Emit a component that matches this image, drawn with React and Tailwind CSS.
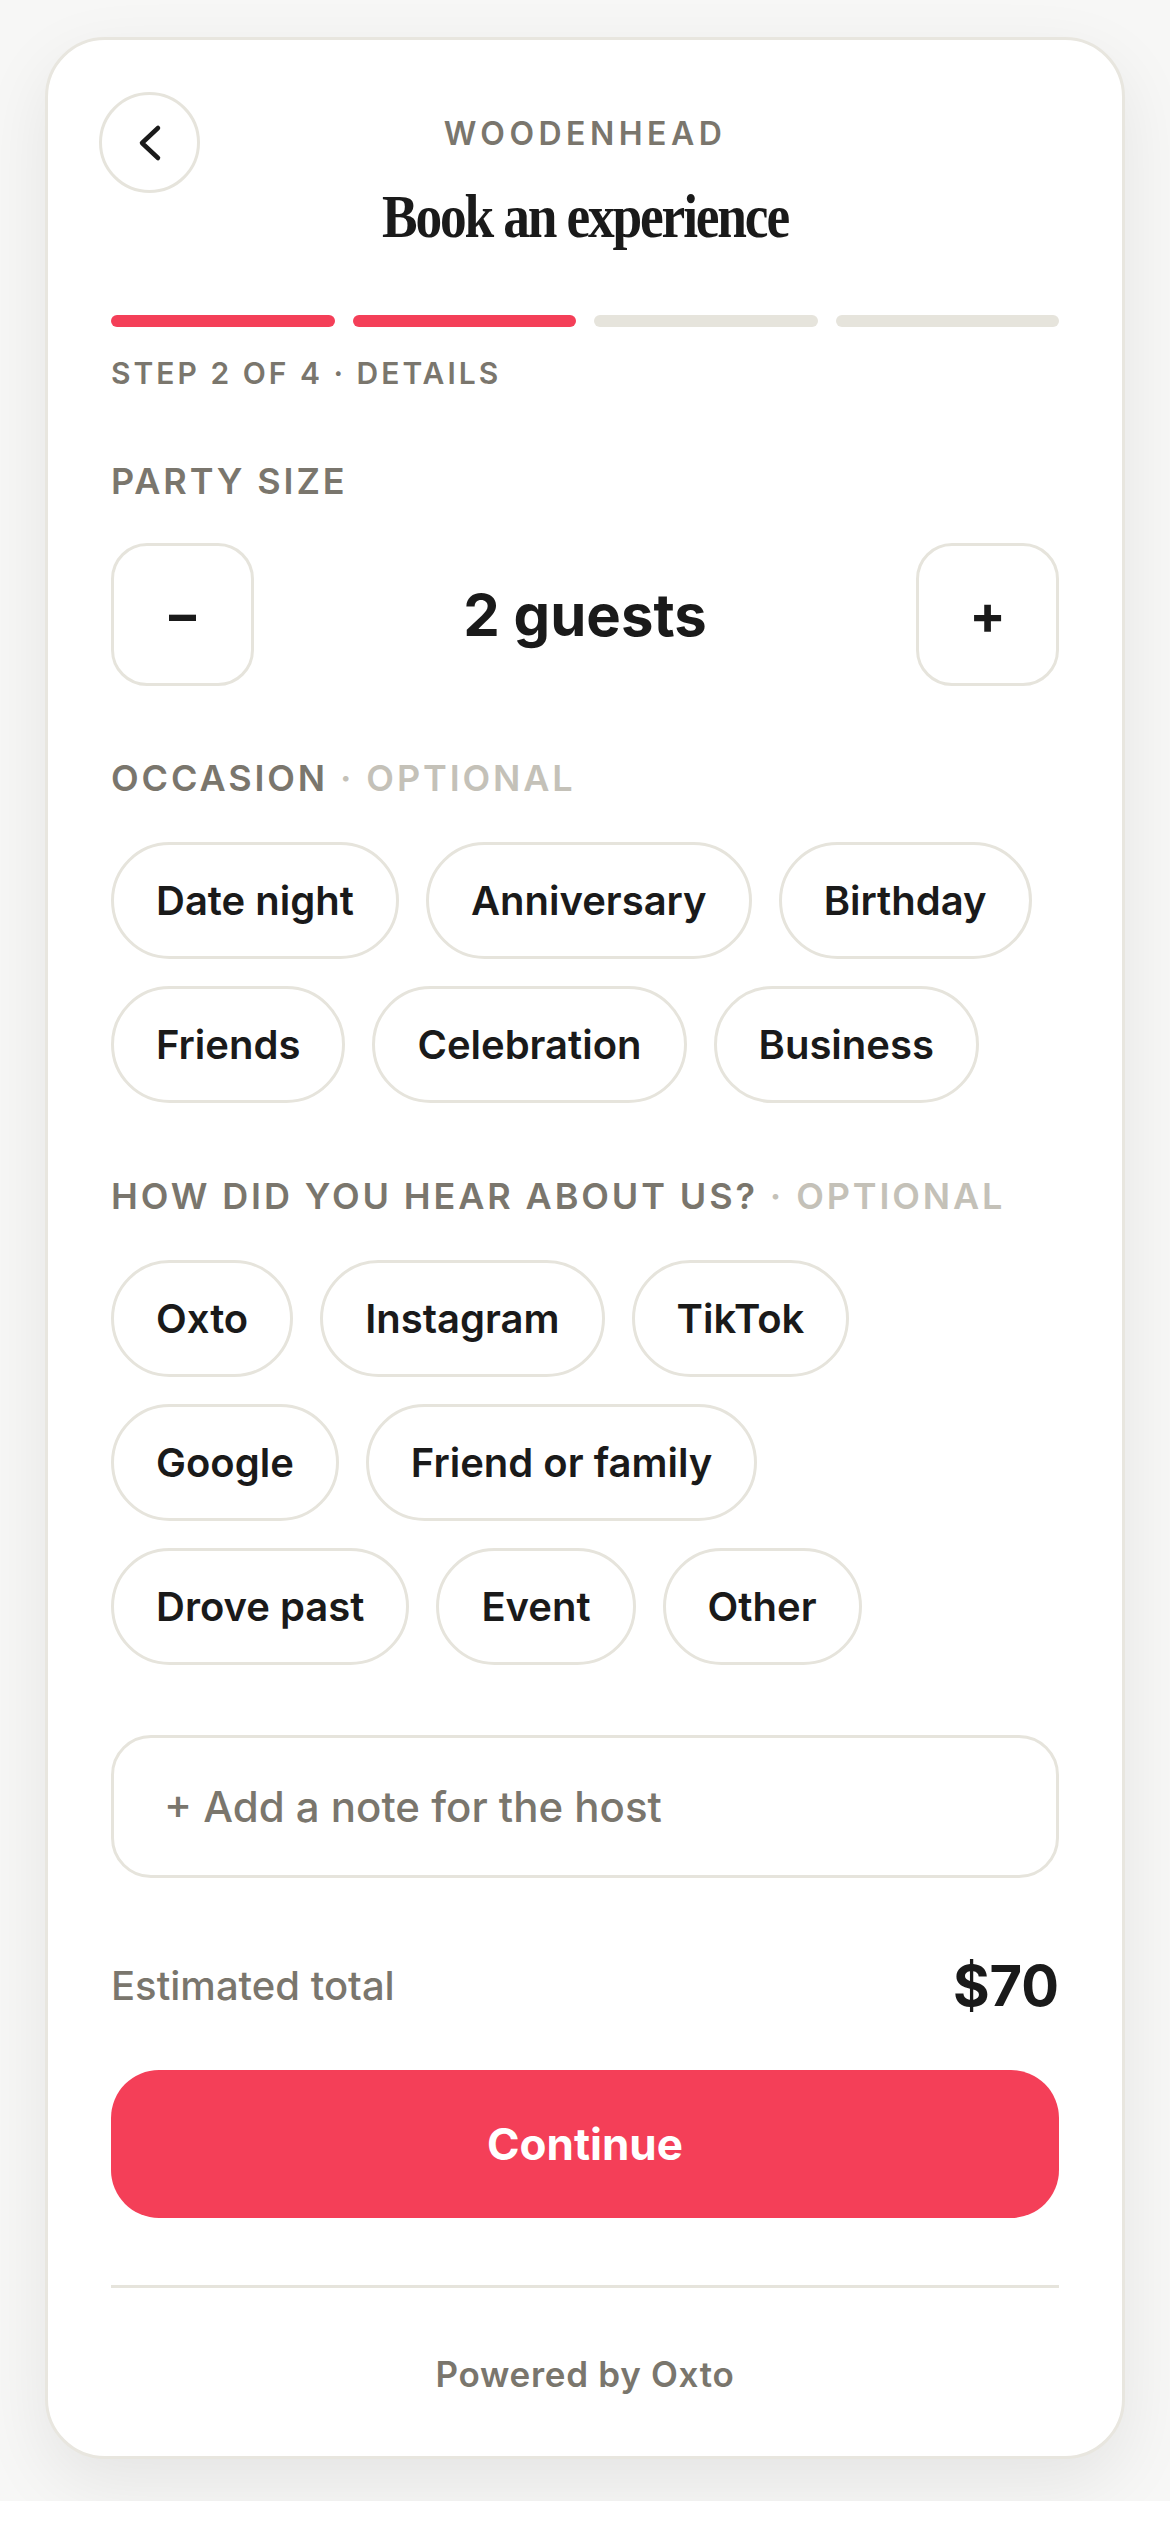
import React, { useState } from 'react';

const occasions = ['Date night', 'Anniversary', 'Birthday', 'Friends', 'Celebration', 'Business'];
const sources = ['Oxto', 'Instagram', 'TikTok', 'Google', 'Friend or family', 'Drove past', 'Event', 'Other'];

const SectionLabel = ({ children, optional = false }) => (
  <div className="text-[36px] leading-none font-semibold tracking-[0.08em] text-[#7a766d]">
    {children}
    {optional && <span className="text-[#c4c1b8]"> · OPTIONAL</span>}
  </div>
);

const Chip = ({ label, active, onClick }) => (
  <button
    onClick={onClick}
    className={`h-[117px] px-[42px] rounded-full border-[3px] text-[40px] leading-none font-semibold ${
      active ? 'border-[#1a1a1a] bg-[#1a1a1a] text-white' : 'border-[#e6e4dc] bg-white text-[#1a1a1a]'
    }`}
  >
    {label}
  </button>
);

const App = () => {
  const [guests, setGuests] = useState(2);
  const [occasion, setOccasion] = useState(null);
  const [source, setSource] = useState(null);

  return (
    <div className="bg-[#f7f7f6] pt-[37px] pb-[42px] font-['Inter',sans-serif]">
      <div className="mx-[45px] bg-white border-[3px] border-[#e8e6df] rounded-[60px] shadow-[0_24px_70px_rgba(0,0,0,0.08)] px-[63px] pt-[78px] pb-[64px]">
        {/* Header */}
        <div className="relative flex flex-col items-center">
          <button className="absolute left-[-12px] top-[-26px] w-[101px] h-[101px] rounded-full border-[3px] border-[#e6e4dc] flex items-center justify-center">
            <svg width="40" height="40" viewBox="0 0 40 40" fill="none">
              <path d="M28 5 L12 20 L28 35" stroke="#1a1a1a" strokeWidth="4.5" strokeLinecap="round" strokeLinejoin="round" />
            </svg>
          </button>
          <div className="text-[32px] leading-none font-semibold tracking-[0.14em] text-[#7a766d]">WOODENHEAD</div>
          <h1 className="mt-[35px] text-[62px] leading-none font-bold font-['Liberation_Serif',serif] tracking-[-0.04em] scale-x-[0.86] text-[#1a1a1a]">
            Book an experience
          </h1>
        </div>

        {/* Progress */}
        <div className="mt-[68px] flex gap-[18px]">
          <div className="flex-1 h-[12px] rounded-full bg-[#f43f58]"></div>
          <div className="flex-1 h-[12px] rounded-full bg-[#f43f58]"></div>
          <div className="flex-1 h-[12px] rounded-full bg-[#e6e4dc]"></div>
          <div className="flex-1 h-[12px] rounded-full bg-[#e6e4dc]"></div>
        </div>
        <div className="mt-[31px] text-[30px] leading-none font-semibold tracking-[0.1em] text-[#7a766d]">
          STEP 2 OF 4 · DETAILS
        </div>

        {/* Party size */}
        <div className="mt-[75px]">
          <SectionLabel>PARTY SIZE</SectionLabel>
        </div>
        <div className="mt-[44px] flex items-center justify-between">
          <button
            onClick={() => setGuests(Math.max(1, guests - 1))}
            className="w-[143px] h-[143px] rounded-[36px] border-[3px] border-[#e6e4dc] flex items-center justify-center text-[54px] leading-none font-bold text-[#1a1a1a]"
          >
            –
          </button>
          <div className="text-[58px] leading-none font-bold text-[#1a1a1a]">{guests} guests</div>
          <button
            onClick={() => setGuests(guests + 1)}
            className="w-[143px] h-[143px] rounded-[36px] border-[3px] border-[#e6e4dc] flex items-center justify-center text-[54px] leading-none font-bold text-[#1a1a1a]"
          >
            +
          </button>
        </div>

        {/* Occasion */}
        <div className="mt-[74px]">
          <SectionLabel optional>OCCASION</SectionLabel>
        </div>
        <div className="mt-[46px] flex flex-wrap gap-[27px]">
          {occasions.map((o) => (
            <Chip key={o} label={o} active={occasion === o} onClick={() => setOccasion(o)} />
          ))}
        </div>

        {/* Source */}
        <div className="mt-[75px]">
          <SectionLabel optional>HOW DID YOU HEAR ABOUT US?</SectionLabel>
        </div>
        <div className="mt-[46px] flex flex-wrap gap-[27px]">
          {sources.map((s) => (
            <Chip key={s} label={s} active={source === s} onClick={() => setSource(s)} />
          ))}
        </div>

        {/* Note */}
        <button className="mt-[70px] w-full h-[143px] rounded-[40px] border-[3px] border-[#e6e4dc] px-[50px] flex items-center text-[42px] leading-none font-medium text-[#7a766d]">
          + Add a note for the host
        </button>

        {/* Total */}
        <div className="mt-[78px] h-[60px] flex items-center justify-between">
          <span className="text-[40px] leading-none font-medium text-[#7a766d]">Estimated total</span>
          <span className="text-[56px] leading-none font-bold text-[#1a1a1a]">${guests * 35}</span>
        </div>

        <button className="mt-[54px] w-full h-[148px] rounded-[48px] bg-[#f43f58] text-white text-[44px] leading-none font-bold">
          Continue
        </button>

        <div className="mt-[67px] h-[3px] bg-[#e6e4dc]"></div>
        <div className="mt-[69px] text-center text-[35px] leading-none font-semibold tracking-[0.02em] text-[#7a766d]">Powered by Oxto</div>
      </div>
    </div>
  );
};

export default App;
